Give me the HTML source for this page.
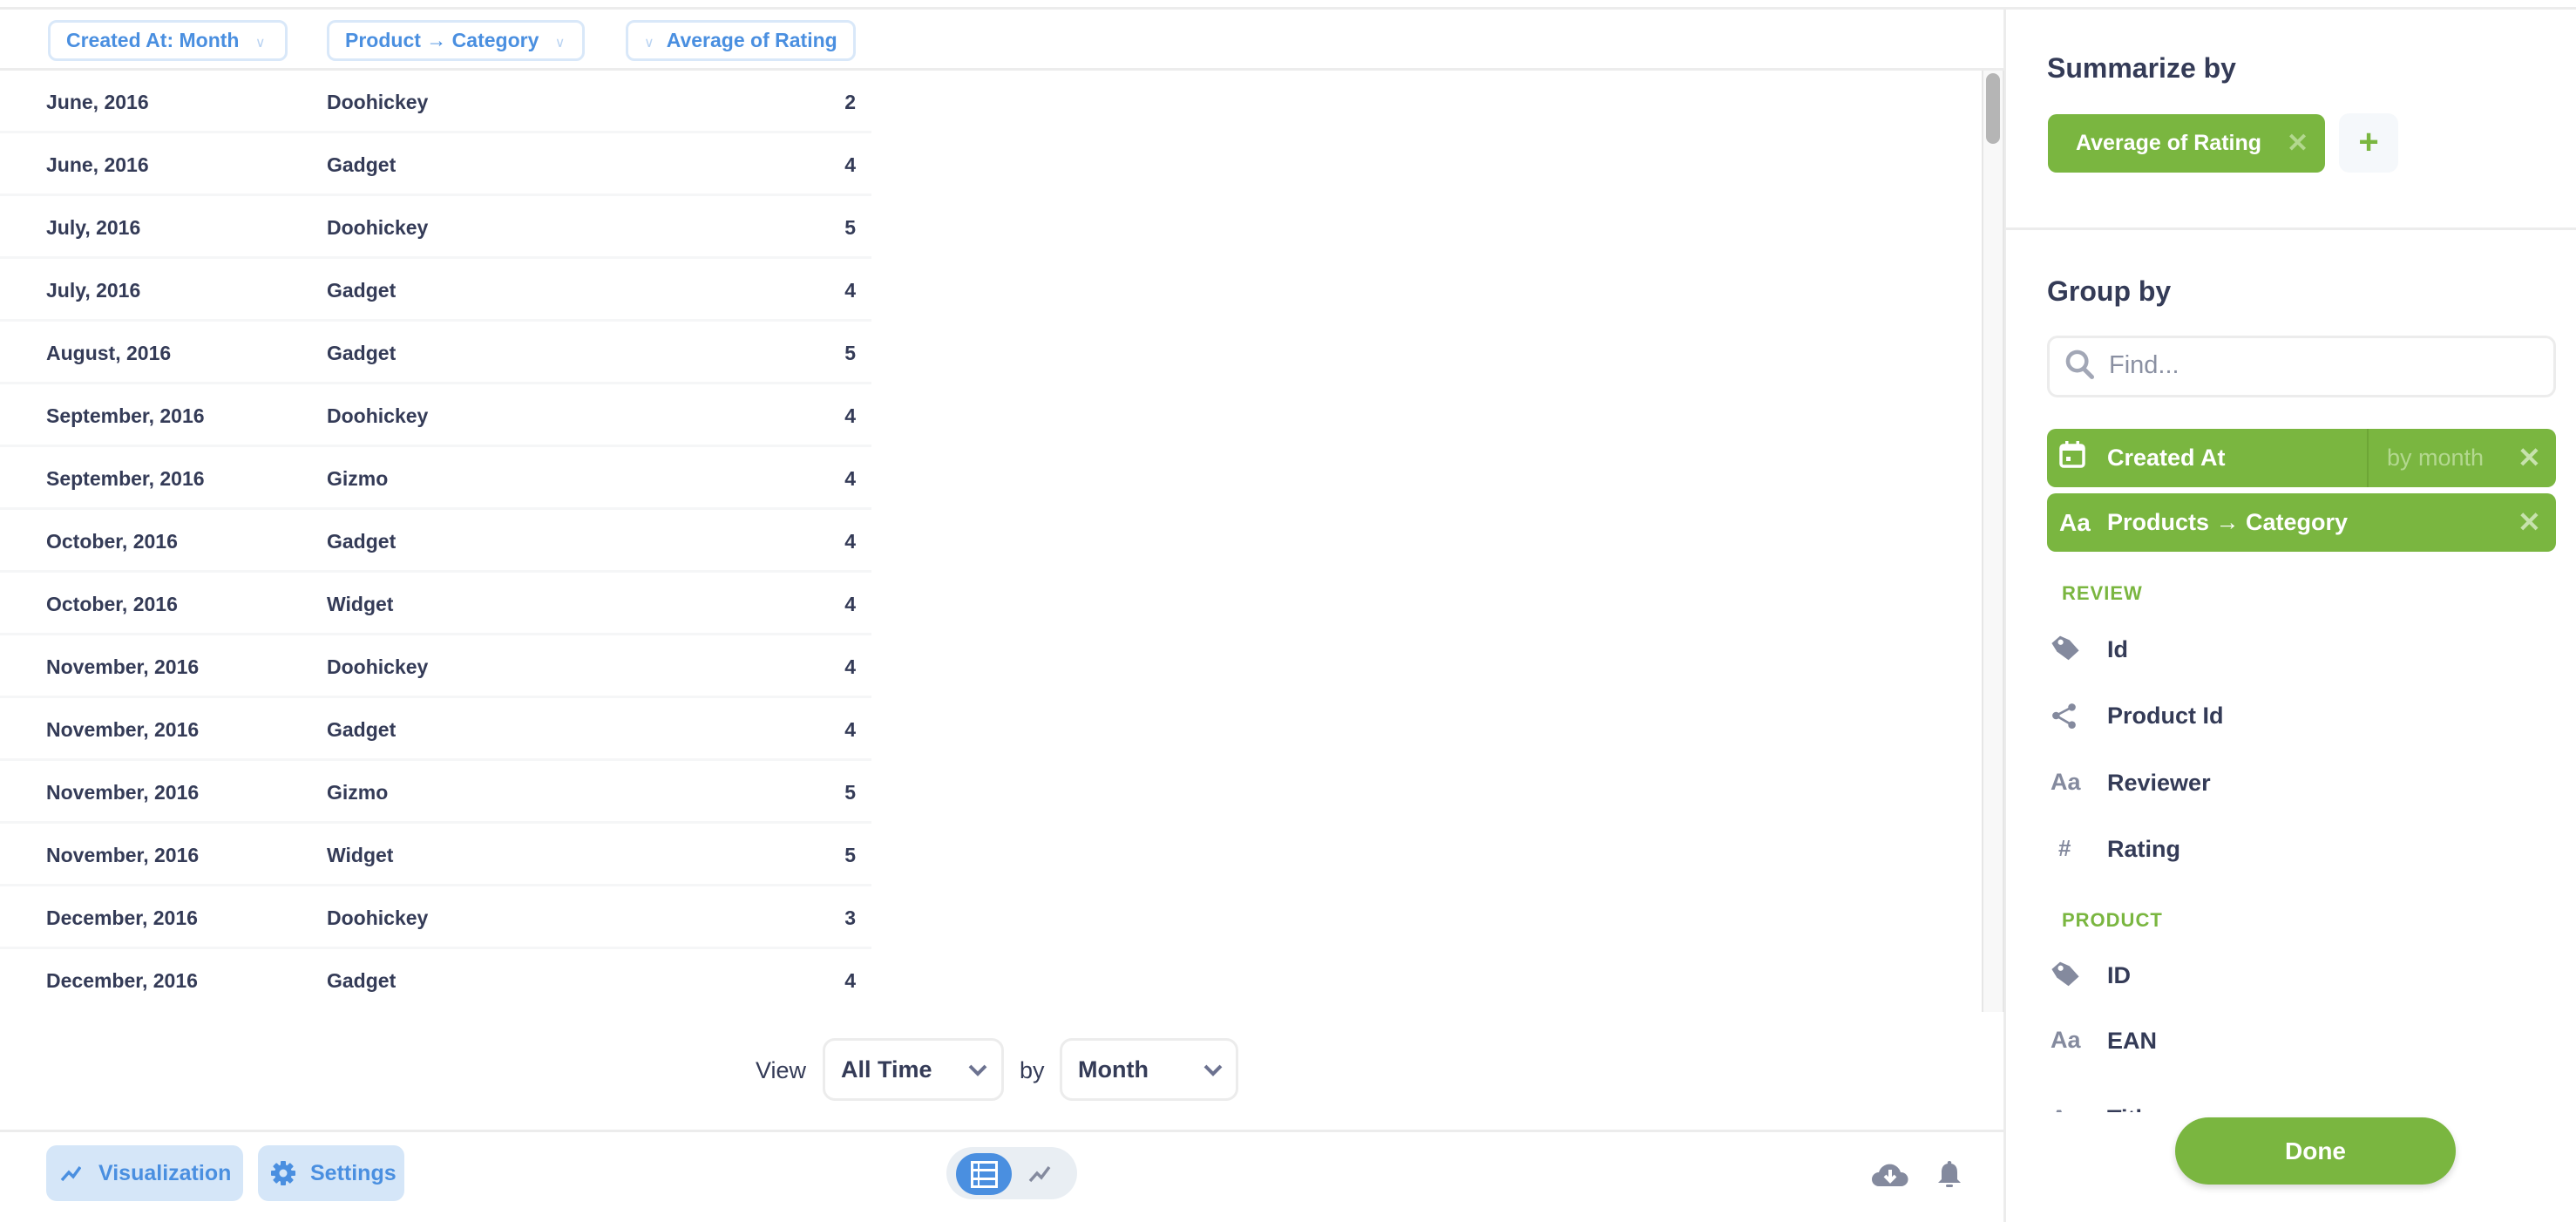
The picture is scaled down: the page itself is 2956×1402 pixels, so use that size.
<!DOCTYPE html>
<html><head><meta charset="utf-8">
<style>
*{box-sizing:border-box;margin:0;padding:0}
body{width:2956px;height:1394px;position:relative;overflow:hidden;background:#fff;font-family:"Liberation Sans",sans-serif;color:#343b57}
.a{position:absolute}
.hp{position:absolute;top:23px;height:47px;border:3px solid #d9e8f9;border-radius:10px;color:#4a8fe0;font-size:23px;font-weight:bold;line-height:41px;padding:0 0 0 18px;white-space:nowrap}
.chev{color:#b9d3f2;font-size:16px;font-weight:normal}
.row{position:absolute;left:0;width:1000px;height:72px;border-bottom:3px solid #f5f6f7;font-size:23px;font-weight:bold;line-height:72px}
.row span{position:absolute}
.c1{left:53px}.c2{left:375px}.c3{right:18px}
.sel{position:absolute;top:1191px;height:72px;border:3px solid #ececec;border-radius:14px;font-size:27px;font-weight:bold;line-height:66px;padding-left:18px;color:#343b57}
.fb{position:absolute;top:1314px;height:64px;background:#d5e6f8;border-radius:12px;color:#4a8fe0;font-size:25px;font-weight:bold;line-height:64px}
.gp{position:absolute;left:2349px;width:584px;background:#7ab640;border-radius:10px;color:#fff;font-size:27px;font-weight:bold}
.it{position:absolute;left:2418px;font-size:27px;font-weight:bold;color:#343b57}
.ic{position:absolute;left:2366px}
.sec{position:absolute;left:2366px;font-size:22px;font-weight:bold;color:#7ab640;letter-spacing:1px}
</style></head><body>
<div class="a" style="left:0;top:8px;width:2956px;height:3px;background:#ececec"></div>
<div class="a" style="left:2299px;top:8px;width:3px;height:1394px;background:#ececec"></div>

<div class="hp" style="left:55px;width:275px">Created At: Month <span class="chev" style="margin-left:12px">∨</span></div>
<div class="hp" style="left:375px;width:296px">Product → Category <span class="chev" style="margin-left:12px">∨</span></div>
<div class="hp" style="left:718px;width:264px"><span class="chev" style="margin-right:14px">∨</span>Average of Rating</div>
<div class="a" style="left:0;top:78px;width:2300px;height:3px;background:#ececec"></div>

<div class="a" style="left:2274px;top:81px;width:26px;height:1080px;background:#f8f8f8;border-left:2px solid #e6e6e6;border-right:2px solid #e6e6e6"></div>
<div class="a" style="left:2279px;top:84px;width:16px;height:81px;background:#b5b5b5;border-radius:8px"></div>

<div class="row" style="top:81px"><span class="c1">June, 2016</span><span class="c2">Doohickey</span><span class="c3">2</span></div>
<div class="row" style="top:153px"><span class="c1">June, 2016</span><span class="c2">Gadget</span><span class="c3">4</span></div>
<div class="row" style="top:225px"><span class="c1">July, 2016</span><span class="c2">Doohickey</span><span class="c3">5</span></div>
<div class="row" style="top:297px"><span class="c1">July, 2016</span><span class="c2">Gadget</span><span class="c3">4</span></div>
<div class="row" style="top:369px"><span class="c1">August, 2016</span><span class="c2">Gadget</span><span class="c3">5</span></div>
<div class="row" style="top:441px"><span class="c1">September, 2016</span><span class="c2">Doohickey</span><span class="c3">4</span></div>
<div class="row" style="top:513px"><span class="c1">September, 2016</span><span class="c2">Gizmo</span><span class="c3">4</span></div>
<div class="row" style="top:585px"><span class="c1">October, 2016</span><span class="c2">Gadget</span><span class="c3">4</span></div>
<div class="row" style="top:657px"><span class="c1">October, 2016</span><span class="c2">Widget</span><span class="c3">4</span></div>
<div class="row" style="top:729px"><span class="c1">November, 2016</span><span class="c2">Doohickey</span><span class="c3">4</span></div>
<div class="row" style="top:801px"><span class="c1">November, 2016</span><span class="c2">Gadget</span><span class="c3">4</span></div>
<div class="row" style="top:873px"><span class="c1">November, 2016</span><span class="c2">Gizmo</span><span class="c3">5</span></div>
<div class="row" style="top:945px"><span class="c1">November, 2016</span><span class="c2">Widget</span><span class="c3">5</span></div>
<div class="row" style="top:1017px"><span class="c1">December, 2016</span><span class="c2">Doohickey</span><span class="c3">3</span></div>
<div class="row" style="top:1089px;border-bottom:none"><span class="c1">December, 2016</span><span class="c2">Gadget</span><span class="c3">4</span></div>

<div class="a" style="left:867px;top:1208px;font-size:27px;line-height:40px;color:#343b57">View</div>
<div class="sel" style="left:944px;width:208px">All Time
<svg class="a" style="left:164px;top:27px" width="22" height="14" viewBox="0 0 22 14"><path d="M2 2l9 9 9-9" stroke="#6c7290" stroke-width="4" fill="none"/></svg></div>
<div class="a" style="left:1170px;top:1208px;font-size:27px;line-height:40px;color:#343b57">by</div>
<div class="sel" style="left:1216px;width:205px">Month
<svg class="a" style="left:162px;top:27px" width="22" height="14" viewBox="0 0 22 14"><path d="M2 2l9 9 9-9" stroke="#6c7290" stroke-width="4" fill="none"/></svg></div>

<div class="a" style="left:0;top:1296px;width:2300px;height:3px;background:#ececec"></div>

<div class="fb" style="left:53px;width:226px">
<svg class="a" style="left:16px;top:21px" width="24" height="22" viewBox="0 0 24 22"><path d="M2 19l8-9 5 5 8-11" stroke="#4a8fe0" stroke-width="3.5" fill="none"/></svg>
<span style="position:absolute;left:60px">Visualization</span></div>
<div class="fb" style="left:296px;width:168px">
<svg class="a" style="left:14px;top:17px" width="30" height="30" viewBox="0 0 30 30"><g fill="#4a8fe0"><circle cx="15" cy="15" r="10"/><rect x="12" y="1" width="6" height="28" rx="1"/><rect x="1" y="12" width="28" height="6" rx="1"/><rect x="12" y="1" width="6" height="28" rx="1" transform="rotate(45 15 15)"/><rect x="12" y="1" width="6" height="28" rx="1" transform="rotate(-45 15 15)"/></g><circle cx="15" cy="15" r="4.5" fill="#d5e6f8"/></svg>
<span style="position:absolute;left:60px">Settings</span></div>

<div class="a" style="left:1086px;top:1316px;width:150px;height:60px;background:#e9eef3;border-radius:30px"></div>
<div class="a" style="left:1097px;top:1323px;width:64px;height:48px;background:#4a8fe0;border-radius:24px"></div>
<svg class="a" style="left:1113px;top:1331px" width="33" height="33" viewBox="0 0 33 33"><rect x="1" y="1" width="31" height="31" fill="#fff"/><g fill="#4a8fe0"><rect x="4" y="4" width="5" height="6"/><rect x="11" y="4" width="18" height="6"/><rect x="4" y="13" width="5" height="7"/><rect x="11" y="13" width="18" height="7"/><rect x="4" y="23" width="5" height="6"/><rect x="11" y="23" width="18" height="6"/></g></svg>
<svg class="a" style="left:1180px;top:1335px" width="26" height="22" viewBox="0 0 26 22"><path d="M2 20l8-9 5 5 9-12" stroke="#848a9e" stroke-width="3.5" fill="none"/></svg>

<svg class="a" style="left:2148px;top:1333px" width="42" height="30" viewBox="0 0 42 30"><path d="M8 28a8 8 0 0 1 0-16 13 13 0 0 1 25 0 8 8 0 0 1 1 16z" fill="#848a9e"/><path d="M21 9v13M15 16l6 6 6-6" stroke="#fff" stroke-width="4" fill="none"/></svg>
<svg class="a" style="left:2222px;top:1331px" width="30" height="32" viewBox="0 0 30 32"><path d="M15 1a2 2 0 0 1 2 3c6 1 7 6 7 10v8l4 4H2l4-4v-8c0-4 1-9 7-10a2 2 0 0 1 2-3z" fill="#848a9e"/><rect x="11" y="28" width="8" height="3" rx="1.5" fill="#848a9e"/></svg>

<!-- sidebar -->
<div class="a" style="left:2349px;top:60px;font-size:32px;font-weight:bold;color:#343b57">Summarize by</div>
<div class="a" style="left:2350px;top:131px;width:318px;height:67px;background:#7ab640;border-radius:10px;color:#fff;font-size:25px;font-weight:bold;line-height:67px;padding-left:32px">Average of Rating<span style="position:absolute;left:274px;top:0;color:#b3d88f;font-size:30px">✕</span></div>
<div class="a" style="left:2684px;top:130px;width:68px;height:68px;background:#f5f8fb;border-radius:12px;color:#7ab640;font-size:40px;font-weight:bold;text-align:center;line-height:66px">+</div>
<div class="a" style="left:2300px;top:261px;width:656px;height:3px;background:#ececec"></div>

<div class="a" style="left:2349px;top:316px;font-size:32px;font-weight:bold;color:#343b57">Group by</div>
<div class="a" style="left:2349px;top:385px;width:584px;height:71px;border:3px solid #ececec;border-radius:12px"></div>
<svg class="a" style="left:2370px;top:401px" width="34" height="36" viewBox="0 0 30 32"><circle cx="12" cy="12" r="9.5" stroke="#a2a7b6" stroke-width="4" fill="none"/><path d="M19 20l8 8" stroke="#a2a7b6" stroke-width="4.5" stroke-linecap="round"/></svg>
<div class="a" style="left:2420px;top:403px;font-size:29px;color:#8a90a2">Find...</div>

<div class="gp" style="top:492px;height:67px;line-height:67px">
<svg class="a" style="left:14px;top:14px" width="30" height="31" viewBox="0 0 30 31"><rect x="2" y="5" width="26" height="24" rx="3" stroke="#fff" stroke-width="3.5" fill="none"/><rect x="2" y="5" width="26" height="6" fill="#fff"/><rect x="7" y="0" width="3.5" height="7" fill="#fff"/><rect x="19.5" y="0" width="3.5" height="7" fill="#fff"/><rect x="8" y="18" width="5" height="5" fill="#fff"/></svg>
<span style="position:absolute;left:69px">Created At</span>
<div class="a" style="left:367px;top:0;width:2px;height:67px;background:#6da636"></div>
<span style="position:absolute;left:390px;color:#b3d88f;font-weight:normal">by month</span>
<span style="position:absolute;left:540px;color:#c7e2ad;font-size:32px">✕</span></div>
<div class="gp" style="top:566px;height:67px;line-height:67px">
<span style="position:absolute;left:14px;font-size:28px">Aa</span>
<span style="position:absolute;left:69px">Products → Category</span>
<span style="position:absolute;left:540px;color:#c7e2ad;font-size:32px">✕</span></div>

<div class="sec" style="top:668px">REVIEW</div>
<svg class="ic" style="top:728px;left:2352px" width="36" height="32" viewBox="0 0 30 26"><path d="M2 8L10 1l9 4 9 10-10 9-11-8z" fill="#848a9e"/><circle cx="10.5" cy="7" r="2.6" fill="#fff"/></svg>
<div class="it" style="top:730px">Id</div>
<svg class="ic" style="top:806px;left:2354px" width="30" height="30" viewBox="0 0 28 28"><g fill="#848a9e"><circle cx="22" cy="5" r="4"/><circle cx="5" cy="14" r="4"/><circle cx="22" cy="24" r="4"/></g><path d="M22 5L5 14l17 10" stroke="#848a9e" stroke-width="2.5" fill="none"/></svg>
<div class="it" style="top:806px">Product Id</div>
<div class="ic" style="top:882px;left:2353px;font-size:27px;font-weight:bold;color:#848a9e">Aa</div>
<div class="it" style="top:883px">Reviewer</div>
<div class="ic" style="top:958px;left:2362px;font-size:26px;font-weight:bold;color:#848a9e">#</div>
<div class="it" style="top:959px">Rating</div>
<div class="sec" style="top:1043px">PRODUCT</div>
<svg class="ic" style="top:1102px;left:2352px" width="36" height="32" viewBox="0 0 30 26"><path d="M2 8L10 1l9 4 9 10-10 9-11-8z" fill="#848a9e"/><circle cx="10.5" cy="7" r="2.6" fill="#fff"/></svg>
<div class="it" style="top:1104px">ID</div>
<div class="ic" style="top:1178px;left:2353px;font-size:27px;font-weight:bold;color:#848a9e">Aa</div>
<div class="it" style="top:1179px">EAN</div>
<div class="a" style="left:2300px;top:1250px;width:656px;height:26px;overflow:hidden"><div class="a" style="left:53px;top:18px;font-size:27px;font-weight:bold;color:#848a9e">Aa</div><div class="a" style="left:118px;top:18px;font-size:27px;font-weight:bold;color:#343b57">Title</div></div>
<div class="a" style="left:2302px;top:1276px;width:654px;height:118px;background:#fff"></div>
<div class="a" style="left:2496px;top:1282px;width:322px;height:77px;background:#7ab640;border-radius:39px;color:#fff;font-size:28px;font-weight:bold;text-align:center;line-height:77px;box-shadow:0 4px 8px rgba(0,0,0,0.15)">Done</div>
</body></html>
